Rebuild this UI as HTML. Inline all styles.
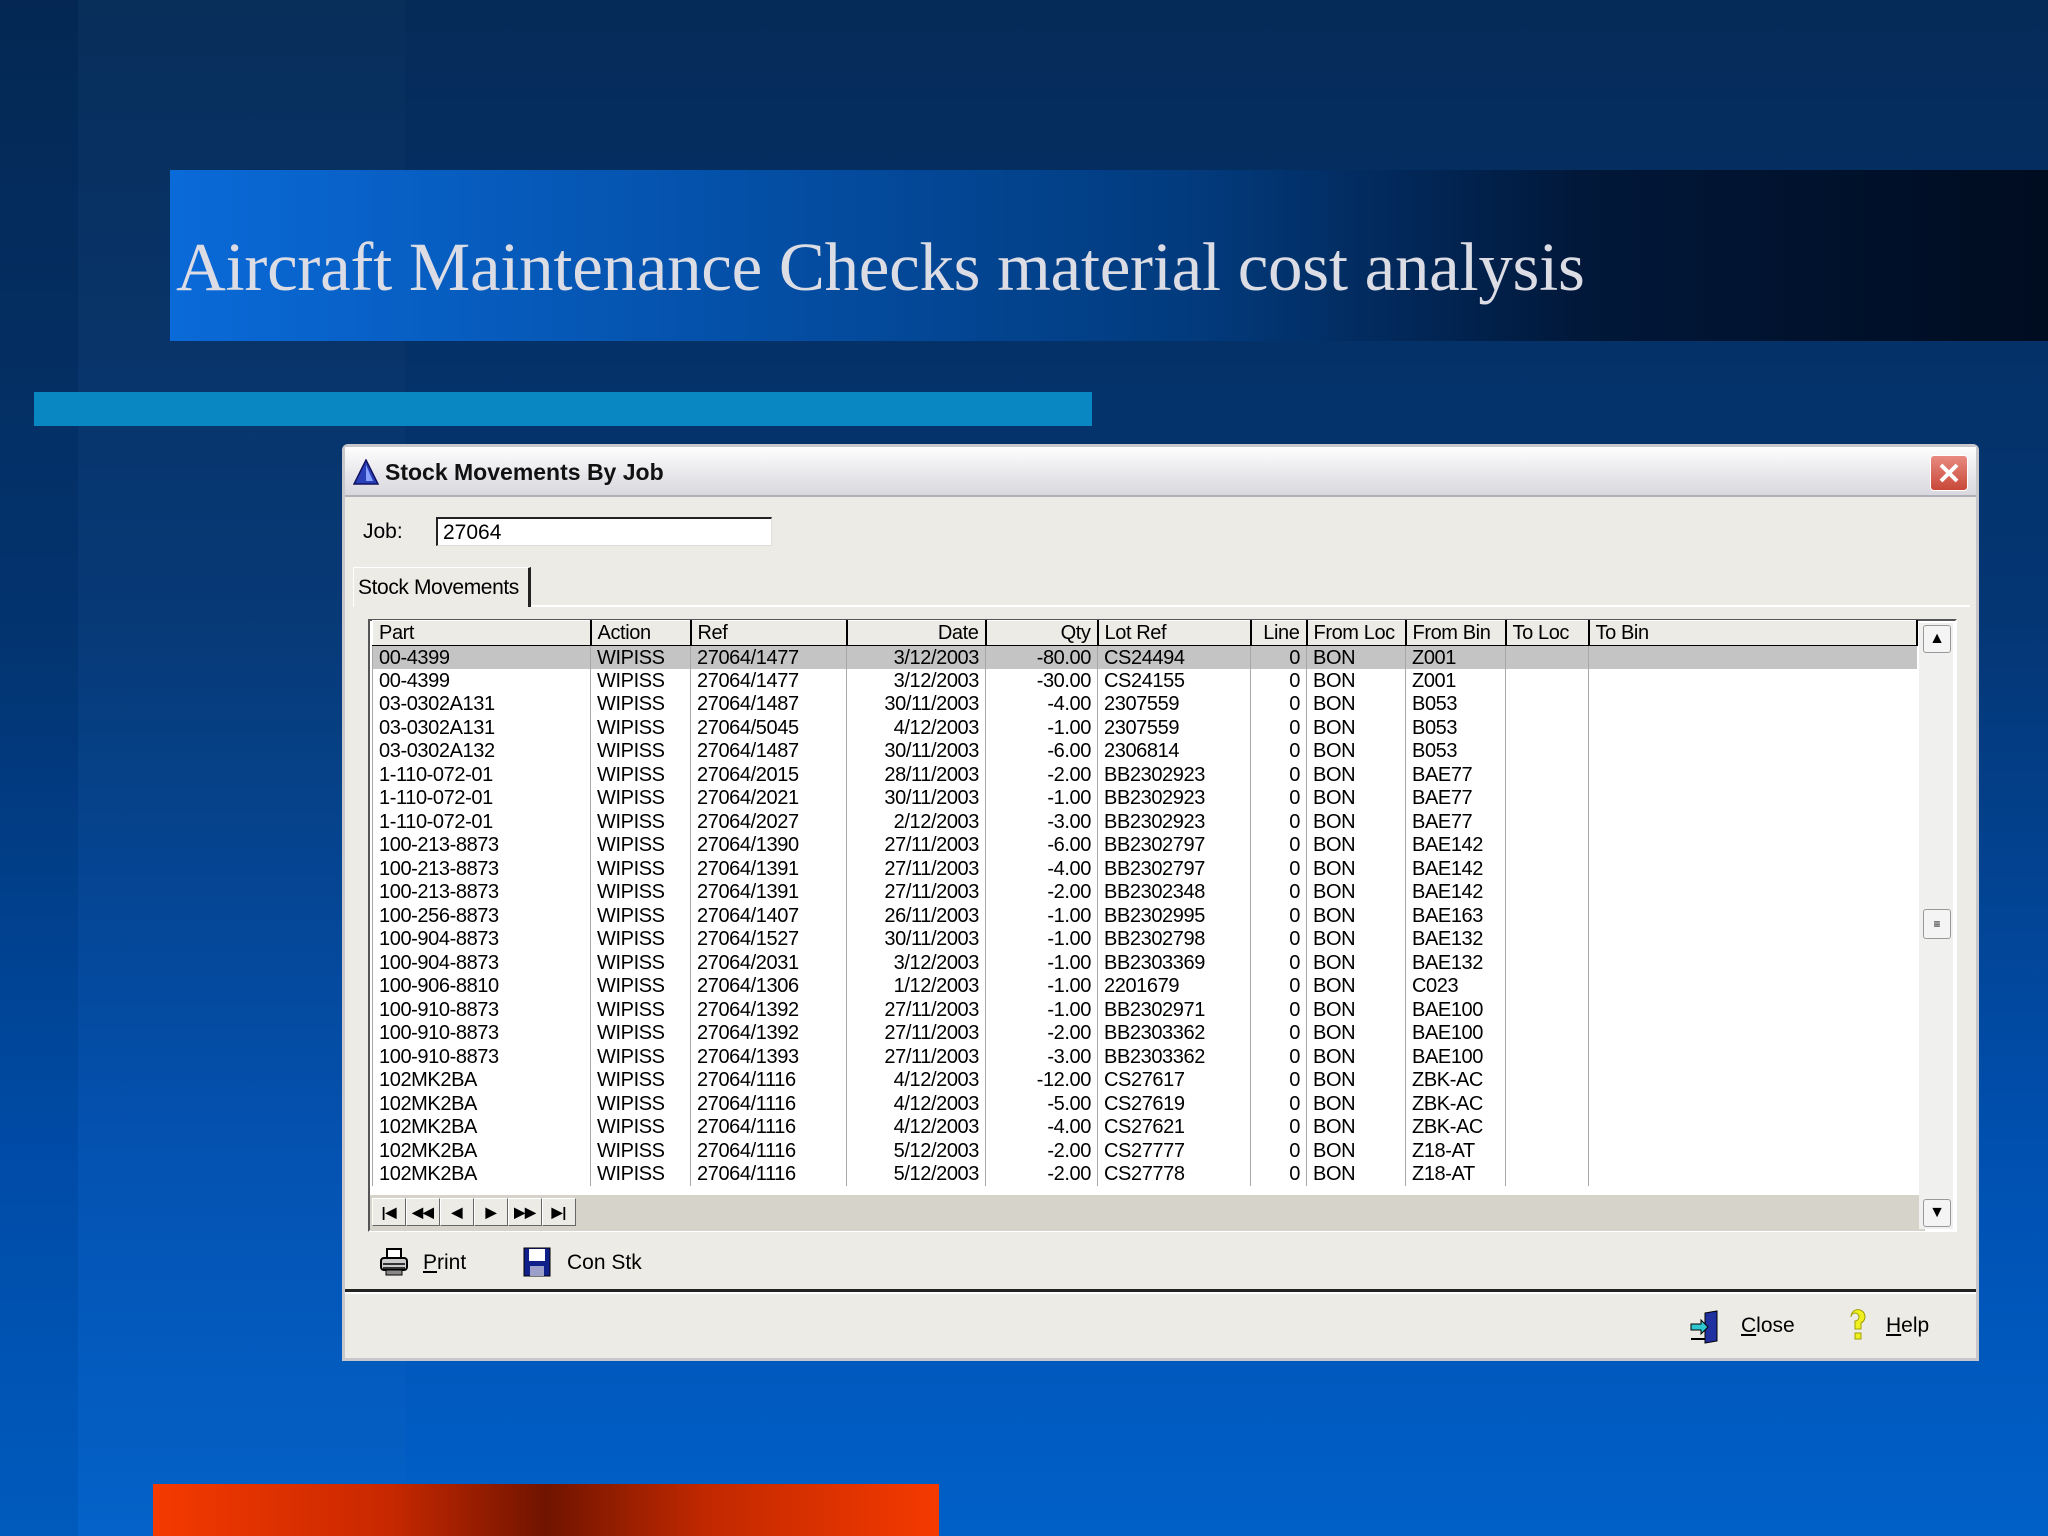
<!DOCTYPE html>
<html><head><meta charset="utf-8">
<style>
*{margin:0;padding:0;box-sizing:border-box}
body{width:2048px;height:1536px;overflow:hidden;position:relative;background:linear-gradient(180deg,#052b58 0%,#043674 40%,#0050b0 75%,#0060c8 100%);font-family:"Liberation Sans Narrow","Liberation Sans",sans-serif}
.abs{position:absolute}
#win{left:342px;top:444px;width:1637px;height:917px;background:#ecebe6;border:3px solid #c8c8cc;border-radius:6px 6px 0 0}
#tb{left:0;top:0;width:100%;height:50px;background:linear-gradient(180deg,#fefefe,#e6e6ea 60%,#d8d8de);border-bottom:2px solid #b0b0b8}
.t{font-size:21px;color:#000;white-space:nowrap}
table{border-collapse:collapse;table-layout:fixed;position:absolute;left:372px;top:620px}
td{height:23.5px;font-size:20px;line-height:22px;padding:0 6px;white-space:nowrap;overflow:hidden;border-left:1px solid #a8a8a8;color:#000;letter-spacing:-0.4px}
th{height:25px;font-size:20px;font-weight:normal;text-align:left;padding:0 6px;background:#ecebe6;border:1px solid #000;border-top:1px solid #fff;border-left:1px solid #fff;border-right:2px solid #000;white-space:nowrap;overflow:hidden;letter-spacing:-0.4px}
.r{text-align:right}
tr.sel td{background:#c4c4c4}
.nb{display:inline-block;width:34px;height:28px;background:#ecebe6;border:1px solid #fff;border-right:1px solid #666;border-bottom:1px solid #666;font-size:14px;text-align:center;line-height:26px;font-weight:bold;vertical-align:top}
</style></head><body>
<div class="abs" style="left:0;top:0;width:78px;height:1536px;background:rgba(0,0,0,0.05)"></div>
<div class="abs" style="left:78px;top:0;width:327px;height:1536px;background:rgba(255,255,255,0.015)"></div>
<div class="abs" style="left:170px;top:170px;width:1878px;height:171px;background:linear-gradient(90deg,#0a6ad8 0%,#0450a8 30%,#023a7c 55%,#01183a 75%,#000c20 100%)"></div>
<div class="abs" style="left:176px;top:228px;font-family:'Liberation Serif',serif;font-size:69px;color:#dcdce4;white-space:nowrap;letter-spacing:-0.3px">Aircraft Maintenance Checks material cost analysis</div>
<div class="abs" style="left:34px;top:392px;width:1058px;height:34px;background:#0887c3"></div>
<div class="abs" style="left:153px;top:1484px;width:786px;height:52px;background:linear-gradient(90deg,#f53a00 0%,#c82800 30%,#701400 50%,#c02800 70%,#f53a00 100%)"></div>

<div id="win" class="abs">
 <div id="tb" class="abs">
  <svg class="abs" style="left:8px;top:12px" width="26" height="26" viewBox="0 0 26 26"><polygon points="13,1 25,25 1,25" fill="#2a40b8" stroke="#101060" stroke-width="1.5"/><polygon points="13,6 20,22 13,22" fill="#8aa0ff"/></svg>
  <div class="abs t" style="left:40px;top:12px;font-weight:bold;font-size:23px;color:#111">Stock Movements By Job</div>
  <div class="abs" style="left:1585px;top:8px;width:38px;height:36px;background:linear-gradient(180deg,#e88a80,#c84838);border:1px solid #fff;border-radius:4px"><svg width="36" height="34" viewBox="0 0 36 34"><path d="M10 9 L26 25 M26 9 L10 25" stroke="#fff" stroke-width="4"/></svg></div>
 </div>
 <div class="abs t" style="left:18px;top:73px">Job:</div>
 <div class="abs" style="left:91px;top:70px;width:336px;height:29px;background:#fff;border-top:2px solid #222;border-left:2px solid #222;border-right:1px solid #ddd;border-bottom:1px solid #ddd"><span class="t" style="position:absolute;left:5px;top:2px">27064</span></div>
 <div class="abs" style="left:8px;width:1617px;height:2px;background:#fff;top:158px"></div>
 <div class="abs" style="left:8px;top:120px;width:178px;height:40px;border-top:1px solid #fff;border-left:1px solid #fff;border-right:3px solid #222;background:#ecebe6"><span class="t" style="position:absolute;left:4px;top:8px;letter-spacing:-0.4px">Stock Movements</span></div>
 <div class="abs" style="left:23px;top:172px;width:1589px;height:613px;border:2px solid #555;border-right-color:#fff;border-bottom-color:#fff;background:#fff"></div>
 <div class="abs" style="left:25px;top:748px;width:1555px;height:36px;background:#d6d3ca"></div>
 <div class="abs" style="left:27px;top:751px"><span class="nb">|◀</span><span class="nb">◀◀</span><span class="nb">◀</span><span class="nb">▶</span><span class="nb">▶▶</span><span class="nb">▶|</span></div>
 <div class="abs" style="left:1574px;top:176px;width:34px;height:606px;background:#f0f0ee"></div>
 <div class="abs" style="left:1578px;top:178px;width:28px;height:28px;background:#f4f4f4;border:1px solid #999;border-radius:3px;text-align:center;font-size:16px;line-height:26px">▲</div>
 <div class="abs" style="left:1578px;top:462px;width:28px;height:30px;background:#f4f4f4;border:1px solid #999;border-radius:3px;text-align:center;font-size:12px;line-height:28px">≡</div>
 <div class="abs" style="left:1578px;top:752px;width:28px;height:28px;background:#f4f4f4;border:1px solid #999;border-radius:3px;text-align:center;font-size:16px;line-height:26px">▼</div>
 <svg class="abs" style="left:33px;top:800px" width="32" height="30" viewBox="0 0 32 30"><rect x="9" y="2" width="14" height="10" fill="#fff" stroke="#000" stroke-width="2"/><rect x="3" y="11" width="26" height="12" rx="3" fill="#ccc" stroke="#000" stroke-width="2"/><path d="M5 17h22M5 21h22" stroke="#000" stroke-width="1.5"/><rect x="8" y="23" width="16" height="5" fill="#888" stroke="#000"/></svg>
 <div class="abs t" style="left:78px;top:804px"><u>P</u>rint</div>
 <svg class="abs" style="left:178px;top:800px" width="28" height="30" viewBox="0 0 28 30"><rect x="1" y="1" width="26" height="28" fill="#10208a" stroke="#000"/><rect x="6" y="2" width="16" height="12" fill="#fff"/><rect x="7" y="19" width="14" height="10" fill="#9aa0c8"/></svg>
 <div class="abs t" style="left:222px;top:804px">Con Stk</div>
 <div class="abs" style="left:0;top:842px;width:1631px;height:3px;background:#222"></div>
 <div class="abs" style="left:0;top:845px;width:1631px;height:2px;background:#fff"></div>
 <svg class="abs" style="left:1344px;top:862px" width="36" height="36" viewBox="0 0 36 36"><path d="M16 4 L28 2 L28 32 L16 34 Z" fill="#2030a0" stroke="#000"/><path d="M2 15 h10 v-4 l7 7 -7 7 v-4 H2 Z" fill="#30c8d0" stroke="#000"/><path d="M2 30 h14" stroke="#000" stroke-width="2"/></svg>
 <div class="abs t" style="left:1396px;top:867px"><u>C</u>lose</div>
 <svg class="abs" style="left:1500px;top:860px" width="26" height="36" viewBox="0 0 26 36"><path d="M6 10 a7 7 0 1 1 10 6 v6 h-6 v-8 a4 4 0 1 0 -4 -4 Z" fill="#f0f020" stroke="#a0a000"/><rect x="10" y="26" width="6" height="6" fill="#f0f020" stroke="#a0a000"/></svg>
 <div class="abs t" style="left:1541px;top:867px"><u>H</u>elp</div>
</div>

<table>
<colgroup><col style="width:218px"><col style="width:100px"><col style="width:156px"><col style="width:139px"><col style="width:112px"><col style="width:153px"><col style="width:56px"><col style="width:99px"><col style="width:100px"><col style="width:83px"><col style="width:328px"></colgroup>
<tr><th>Part</th><th>Action</th><th>Ref</th><th class="r">Date</th><th class="r">Qty</th><th>Lot Ref</th><th class="r">Line</th><th>From Loc</th><th>From Bin</th><th>To Loc</th><th>To Bin</th></tr>
<tr class="sel"><td>00-4399</td><td>WIPISS</td><td>27064/1477</td><td class="r">3/12/2003</td><td class="r">-80.00</td><td>CS24494</td><td class="r">0</td><td>BON</td><td>Z001</td><td></td><td></td></tr>
<tr><td>00-4399</td><td>WIPISS</td><td>27064/1477</td><td class="r">3/12/2003</td><td class="r">-30.00</td><td>CS24155</td><td class="r">0</td><td>BON</td><td>Z001</td><td></td><td></td></tr>
<tr><td>03-0302A131</td><td>WIPISS</td><td>27064/1487</td><td class="r">30/11/2003</td><td class="r">-4.00</td><td>2307559</td><td class="r">0</td><td>BON</td><td>B053</td><td></td><td></td></tr>
<tr><td>03-0302A131</td><td>WIPISS</td><td>27064/5045</td><td class="r">4/12/2003</td><td class="r">-1.00</td><td>2307559</td><td class="r">0</td><td>BON</td><td>B053</td><td></td><td></td></tr>
<tr><td>03-0302A132</td><td>WIPISS</td><td>27064/1487</td><td class="r">30/11/2003</td><td class="r">-6.00</td><td>2306814</td><td class="r">0</td><td>BON</td><td>B053</td><td></td><td></td></tr>
<tr><td>1-110-072-01</td><td>WIPISS</td><td>27064/2015</td><td class="r">28/11/2003</td><td class="r">-2.00</td><td>BB2302923</td><td class="r">0</td><td>BON</td><td>BAE77</td><td></td><td></td></tr>
<tr><td>1-110-072-01</td><td>WIPISS</td><td>27064/2021</td><td class="r">30/11/2003</td><td class="r">-1.00</td><td>BB2302923</td><td class="r">0</td><td>BON</td><td>BAE77</td><td></td><td></td></tr>
<tr><td>1-110-072-01</td><td>WIPISS</td><td>27064/2027</td><td class="r">2/12/2003</td><td class="r">-3.00</td><td>BB2302923</td><td class="r">0</td><td>BON</td><td>BAE77</td><td></td><td></td></tr>
<tr><td>100-213-8873</td><td>WIPISS</td><td>27064/1390</td><td class="r">27/11/2003</td><td class="r">-6.00</td><td>BB2302797</td><td class="r">0</td><td>BON</td><td>BAE142</td><td></td><td></td></tr>
<tr><td>100-213-8873</td><td>WIPISS</td><td>27064/1391</td><td class="r">27/11/2003</td><td class="r">-4.00</td><td>BB2302797</td><td class="r">0</td><td>BON</td><td>BAE142</td><td></td><td></td></tr>
<tr><td>100-213-8873</td><td>WIPISS</td><td>27064/1391</td><td class="r">27/11/2003</td><td class="r">-2.00</td><td>BB2302348</td><td class="r">0</td><td>BON</td><td>BAE142</td><td></td><td></td></tr>
<tr><td>100-256-8873</td><td>WIPISS</td><td>27064/1407</td><td class="r">26/11/2003</td><td class="r">-1.00</td><td>BB2302995</td><td class="r">0</td><td>BON</td><td>BAE163</td><td></td><td></td></tr>
<tr><td>100-904-8873</td><td>WIPISS</td><td>27064/1527</td><td class="r">30/11/2003</td><td class="r">-1.00</td><td>BB2302798</td><td class="r">0</td><td>BON</td><td>BAE132</td><td></td><td></td></tr>
<tr><td>100-904-8873</td><td>WIPISS</td><td>27064/2031</td><td class="r">3/12/2003</td><td class="r">-1.00</td><td>BB2303369</td><td class="r">0</td><td>BON</td><td>BAE132</td><td></td><td></td></tr>
<tr><td>100-906-8810</td><td>WIPISS</td><td>27064/1306</td><td class="r">1/12/2003</td><td class="r">-1.00</td><td>2201679</td><td class="r">0</td><td>BON</td><td>C023</td><td></td><td></td></tr>
<tr><td>100-910-8873</td><td>WIPISS</td><td>27064/1392</td><td class="r">27/11/2003</td><td class="r">-1.00</td><td>BB2302971</td><td class="r">0</td><td>BON</td><td>BAE100</td><td></td><td></td></tr>
<tr><td>100-910-8873</td><td>WIPISS</td><td>27064/1392</td><td class="r">27/11/2003</td><td class="r">-2.00</td><td>BB2303362</td><td class="r">0</td><td>BON</td><td>BAE100</td><td></td><td></td></tr>
<tr><td>100-910-8873</td><td>WIPISS</td><td>27064/1393</td><td class="r">27/11/2003</td><td class="r">-3.00</td><td>BB2303362</td><td class="r">0</td><td>BON</td><td>BAE100</td><td></td><td></td></tr>
<tr><td>102MK2BA</td><td>WIPISS</td><td>27064/1116</td><td class="r">4/12/2003</td><td class="r">-12.00</td><td>CS27617</td><td class="r">0</td><td>BON</td><td>ZBK-AC</td><td></td><td></td></tr>
<tr><td>102MK2BA</td><td>WIPISS</td><td>27064/1116</td><td class="r">4/12/2003</td><td class="r">-5.00</td><td>CS27619</td><td class="r">0</td><td>BON</td><td>ZBK-AC</td><td></td><td></td></tr>
<tr><td>102MK2BA</td><td>WIPISS</td><td>27064/1116</td><td class="r">4/12/2003</td><td class="r">-4.00</td><td>CS27621</td><td class="r">0</td><td>BON</td><td>ZBK-AC</td><td></td><td></td></tr>
<tr><td>102MK2BA</td><td>WIPISS</td><td>27064/1116</td><td class="r">5/12/2003</td><td class="r">-2.00</td><td>CS27777</td><td class="r">0</td><td>BON</td><td>Z18-AT</td><td></td><td></td></tr>
<tr><td>102MK2BA</td><td>WIPISS</td><td>27064/1116</td><td class="r">5/12/2003</td><td class="r">-2.00</td><td>CS27778</td><td class="r">0</td><td>BON</td><td>Z18-AT</td><td></td><td></td></tr>
</table>
</body></html>
